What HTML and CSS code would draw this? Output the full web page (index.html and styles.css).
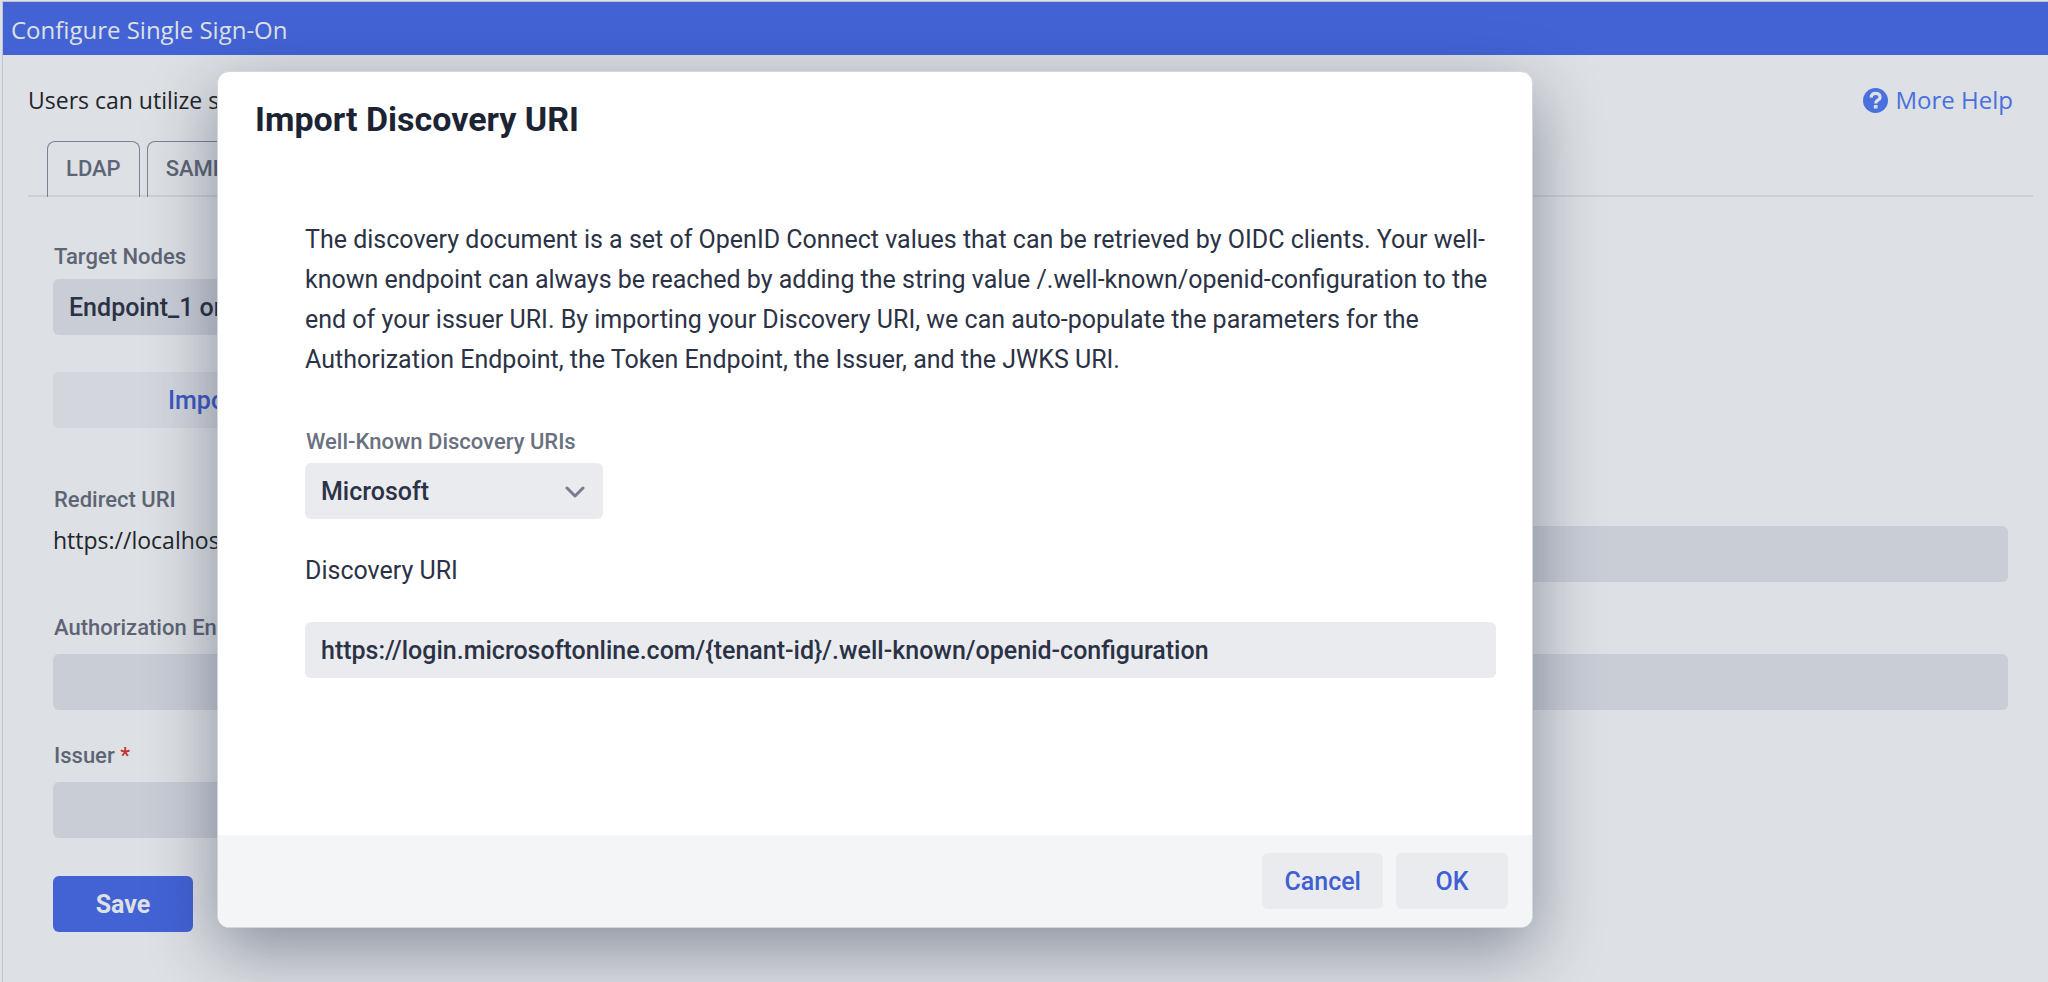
FILE: index.html
```html
<!DOCTYPE html>
<html lang="en">
<head>
  <meta charset="UTF-8">
  <meta name="viewport" content="width=device-width, initial-scale=1.0">
  <title>Configure Single Sign-On</title>
  <link rel="stylesheet" href="styles.css">
</head>
<body>
  <div class="page">
    <header class="page-header">Configure Single Sign-On</header>

    <main class="content">
      <div class="intro">
        <span>Users can utilize single sign-on</span>
        <a href="#help" class="help-link">
          <svg class="help-icon" viewBox="0 0 512 512" aria-hidden="true">
            <circle cx="256" cy="256" r="256" fill="currentColor"/>
            <path d="M166 196c4-58 42-87 92-87 52 0 92 29 92 78 0 62-88 62-88 118v14" fill="none" stroke="#dde0e4" stroke-width="66"/>
            <rect x="222" y="350" width="76" height="70" fill="#dde0e4"/>
          </svg>
          More Help
        </a>
      </div>

      <nav class="tabs">
        <button type="button" class="tab">LDAP</button>
        <button type="button" class="tab">SAML</button>
      </nav>

      <form class="sso-form">
        <div class="field target">
          <label class="label" for="nodes">Target Nodes</label>
          <select class="control" id="nodes">
            <option>Endpoint_1 only</option>
          </select>
        </div>
        <button type="button" class="button import">Import Discovery URI</button>

        <div class="row">
          <div class="field">
            <span class="label">Redirect URI</span>
            <span class="value">https://localhost</span>
          </div>
          <input class="control" type="text" aria-label="Client ID">
        </div>
        <div class="row">
          <div class="field">
            <label class="label" for="auth">Authorization Endpoint <span class="required">*</span></label>
            <input class="control" type="text" id="auth">
          </div>
          <input class="control" type="text" aria-label="Token Endpoint">
        </div>
        <div class="row">
          <div class="field">
            <label class="label" for="issuer">Issuer <span class="required">*</span></label>
            <input class="control" type="text" id="issuer">
          </div>
        </div>

        <button type="button" class="button save">Save</button>
      </form>
    </main>
  </div>

  <div class="overlay">
    <section class="modal" role="dialog" aria-labelledby="modal-title">
      <h1 class="modal-title" id="modal-title">Import Discovery URI</h1>
      <div class="modal-body">
        <p class="description">The discovery document is a set of OpenID Connect values that can be retrieved by OIDC clients. Your well-known endpoint can always be reached by adding the string value /.well-known/openid-configuration to the end of your issuer URI. By importing your Discovery URI, we can auto-populate the parameters for the Authorization Endpoint, the Token Endpoint, the Issuer, and the JWKS URI.</p>

        <div class="field">
          <label class="label" for="provider">Well-Known Discovery URIs</label>
          <div class="select-box">
            <select class="control" id="provider">
              <option>Microsoft</option>
            </select>
            <svg class="chevron" viewBox="0 0 20 12" aria-hidden="true">
              <path d="M2 2l8 8 8-8" fill="none" stroke="currentColor" stroke-width="3" stroke-linecap="round" stroke-linejoin="round"/>
            </svg>
          </div>
        </div>

        <label class="uri-label" for="uri">Discovery URI</label>
        <input class="control" type="text" id="uri" value="https://login.microsoftonline.com/{tenant-id}/.well-known/openid-configuration">
      </div>
      <footer class="modal-footer">
        <button type="button" class="button">Cancel</button>
        <button type="button" class="button">OK</button>
      </footer>
    </section>
  </div>
</body>
</html>
```
FILE: styles.css
```css
* {
  box-sizing: border-box;
}
body {
  margin: 0;
  background-color: #dde0e4;
  font-family: Roboto, Arial, sans-serif;
  font-size: 25px;
  color: #2b3245;
}
.page {
  min-height: 100vh;
  padding: 1px 0 0 2px;
}
.page-header {
  height: 54px;
  padding: 0 8px;
  border-top: 1px solid #c0c4d0;
  border-left: 1px solid #c0c4d0;
  background-color: #4363d5;
  color: #dde0e4;
  font-family: "Open Sans", sans-serif;
  font-size: 24px;
  line-height: 56px;
}
.content {
  min-height: calc(100vh - 55px);
  padding: 24px 15px 24px 25px;
  border-left: 1px solid #c0c4d0;
}
.intro {
  display: flex;
  justify-content: space-between;
  padding-right: 20px;
  color: #212529;
  font-family: "Open Sans", sans-serif;
  font-size: 23px;
  line-height: 42px;
}
.help-link {
  display: flex;
  align-items: center;
  gap: 8px;
  color: #4a70de;
  font-size: 24px;
  text-decoration: none;
}
.help-icon {
  width: 25px;
  height: 25px;
}

/* Tabs */
.tabs {
  display: flex;
  gap: 7px;
  margin-top: 20px;
  padding-left: 19px;
  background: linear-gradient(#cbd0d7, #cbd0d7) bottom / 100% 2px no-repeat;
}
.tab {
  height: 56px;
  padding: 0 18px 2px;
  border: 1px solid #7b8292;
  border-bottom: none;
  border-radius: 8px 8px 0 0;
  background: none;
  color: #5d6575;
  font: 500 22px Roboto, Arial, sans-serif;
}

/* Form */
.sso-form {
  padding: 44px 25px 0;
}
.field {
  display: flex;
  flex-direction: column;
}
.label {
  padding-left: 1px;
  color: #5d6575;
  font-size: 22px;
  font-weight: 500;
  line-height: 32px;
}
.required {
  color: #c5302c;
}
.control {
  width: 100%;
  height: 56px;
  padding: 0 16px;
  border: none;
  border-radius: 6px;
  background-color: #c9cdd6;
  color: #2b3245;
  font: 500 25px Roboto, Arial, sans-serif;
  appearance: none;
}
.button {
  min-width: 112px;
  height: 56px;
  padding: 0 22px;
  border: none;
  border-radius: 6px;
  background-color: #e9ebef;
  color: #405fd3;
  font: 500 25px Roboto, Arial, sans-serif;
}
.target {
  width: 466px;
}
.target .label {
  margin-bottom: 6px;
}
.import {
  width: 466px;
  margin: 37px 0 54px;
  background-color: #d3d6dd;
  color: #3c59c4;
}
.row {
  display: grid;
  grid-template-columns: 1fr 1fr;
  gap: 40px;
  align-items: end;
  height: 100px;
  margin-bottom: 28px;
}
.row .label {
  margin-bottom: 10px;
}
.value {
  height: 56px;
  color: #212529;
  font-family: "Open Sans", sans-serif;
  font-size: 23px;
  line-height: 28px;
}
.save {
  min-width: 140px;
  margin-top: 10px;
  background-color: #4363d5;
  color: #dde0e4;
  font-weight: 700;
}

/* Modal */
.overlay {
  position: absolute;
  top: 0;
  left: 0;
  width: 100%;
  padding: 71px 515px 0 217px;
}
.modal {
  overflow: hidden;
  border: 1px solid #d3d6dd;
  border-radius: 12px;
  background-color: #fff;
  box-shadow: 0 22px 68px rgba(26, 35, 60, 0.43);
}
.modal-title {
  margin: 0;
  padding: 23px 37px 0;
  color: #1c2433;
  font-size: 34px;
  font-weight: 700;
  line-height: 48px;
}
.modal-body {
  padding: 77px 36px 157px 87px;
}
.modal .description {
  margin: 0 0 46px;
  line-height: 40px;
}
.modal .control {
  background-color: #e9ebef;
}
.modal .label {
  margin-bottom: 5px;
  color: #697080;
}
.select-box {
  position: relative;
  width: 298px;
}
.chevron {
  position: absolute;
  top: 23px;
  right: 18px;
  width: 20px;
  height: 12px;
  color: #757c8b;
  pointer-events: none;
}
.uri-label {
  display: block;
  margin: 32px 0 31px;
  line-height: 40px;
}
.modal-footer {
  display: flex;
  justify-content: flex-end;
  gap: 13px;
  padding: 18px 24px;
  background-color: #f3f5f7;
}
```
